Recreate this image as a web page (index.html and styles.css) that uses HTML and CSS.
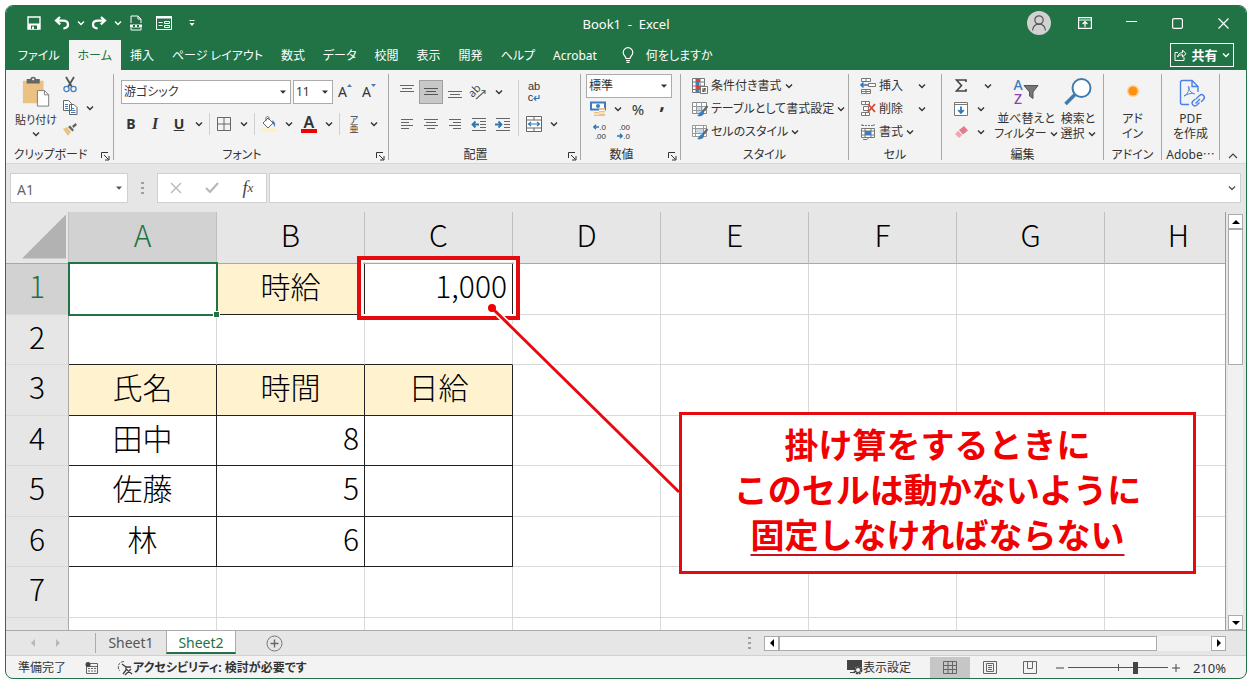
FILE: index.html
```html
<!DOCTYPE html>
<html lang="ja">
<head>
    <meta charset="utf-8">
    <title>Book1 - Excel</title>
    <link rel="stylesheet" href="styles.css">
</head>
<body>
    <svg class="defs" aria-hidden="true">
        <symbol id="chev" viewBox="0 0 8 8"><path d="M1 2.5l3 3 3-3" fill="none" stroke="currentColor" stroke-width="1.4"/></symbol>
        <symbol id="tri" viewBox="0 0 8 8"><path d="M1 2.5h6L4 5.8z" fill="currentColor"/></symbol>
        <symbol id="launch" viewBox="0 0 10 10"><path d="M1.5 7V1.5H8M4 4l4.5 4.5M9 5v4H5" fill="none" stroke="currentColor"/></symbol>
        <symbol id="left" viewBox="0 0 8 8"><path d="M6 0v8L2 4z" fill="currentColor"/></symbol>
        <symbol id="right" viewBox="0 0 8 8"><path d="M2 0v8l4-4z" fill="currentColor"/></symbol>
    </svg>

    <div class="window">
        <header class="titlebar">
            <div class="quick">
                <button class="qbtn" aria-label="上書き保存"><svg width="14" height="14" viewBox="0 0 14 14"><path d="M1 1h12v12H1z" fill="none" stroke="#fff" stroke-width="1.4"/><path d="M1 7.5h12V13H1z" fill="#fff"/><path d="M4 9.5h6V13H4z" fill="#217346"/><path d="M5 10.5h2V13H5z" fill="#fff"/></svg></button>
                <button class="qbtn" aria-label="元に戻す"><svg width="16" height="14" viewBox="0 0 16 14"><path d="M6 1L2 4.6l4.2 3.8M2.5 4.7H9c3 0 5 1.6 5 3.9 0 2.4-2 3.7-4.6 3.9" fill="none" stroke="#fff" stroke-width="2.2"/></svg></button>
                <button class="qcaret" aria-label="元に戻す一覧"><svg width="8" height="8"><use href="#chev"/></svg></button>
                <button class="qbtn" aria-label="やり直し"><svg width="16" height="14" viewBox="0 0 16 14"><path d="M10 1l4 3.6-4.2 3.8M13.5 4.7H7c-3 0-5 1.6-5 3.9 0 2.4 2 3.7 4.6 3.9" fill="none" stroke="#fff" stroke-width="2.2"/></svg></button>
                <button class="qcaret" aria-label="やり直し一覧"><svg width="8" height="8"><use href="#chev"/></svg></button>
                <button class="qbtn" aria-label="印刷プレビュー"><svg width="14" height="16" viewBox="0 0 14 16"><path d="M2 8V1h7l3 3v4M9 1v3h3M2 13v2h10v-2" fill="none" stroke="#fff"/><path d="M1 9.5h12v3H1z" fill="#fff"/><path d="M4 10h6v2H4z" fill="#217346"/><path d="M6 10h2v2H6z" fill="#fff"/></svg></button>
                <button class="qbtn" aria-label="フォーム"><svg width="16" height="14" viewBox="0 0 16 14"><path d="M.5.5h15v13H.5z" fill="none" stroke="#fff"/><path d="M0 0h16v2.500H0zM2.500 6h4v1h-4zM2.500 9h4v1h-4z" fill="#fff"/><path d="M8.500 5.500h5v2h-5zM8.500 9.500h5v2h-5z" fill="none" stroke="#fff"/></svg></button>
                <button class="qbtn" aria-label="クイック アクセスのカスタマイズ"><svg width="8" height="8" viewBox="0 0 8 8"><path d="M1.500 1h5v1h-5zM1.500 4h5L4 7z" fill="#fff"/></svg></button>
            </div>
            <div class="doc-title">Book1&nbsp; -&nbsp; Excel</div>
            <div class="sysbtns">
                <button aria-label="アカウント"><svg width="24" height="24" viewBox="0 0 24 24"><circle cx="12" cy="12" r="12" fill="#d2d2d2"/><circle cx="12" cy="9" r="4.2" fill="none" stroke="#555" stroke-width="1.2"/><path d="M5.500 19.500c.5-4.500 3-6.300 6.500-6.300s6 1.800 6.500 6.300" fill="none" stroke="#555" stroke-width="1.2"/></svg></button>
                <button aria-label="リボンの表示オプション"><svg width="14" height="12" viewBox="0 0 14 12"><path d="M.6.6h12.800v10.800H.6zM.6 3h12.800M7 10V4.800M4.600 7L7 4.700 9.400 7" fill="none" stroke="#fff" stroke-width="1.2"/></svg></button>
                <button aria-label="最小化"><svg width="11" height="11" viewBox="0 0 11 11"><path d="M0 3.500h11" stroke="#fff" stroke-width="1.2"/></svg></button>
                <button aria-label="最大化"><svg width="11" height="11" viewBox="0 0 11 11"><rect x=".6" y=".6" width="9.8" height="9.8" rx="1.5" fill="none" stroke="#fff" stroke-width="1.2"/></svg></button>
                <button aria-label="閉じる"><svg width="11" height="11" viewBox="0 0 11 11"><path d="M.5.5l10 10m0-10l-10 10" stroke="#fff" stroke-width="1.2"/></svg></button>
            </div>
        </header>

        <nav class="tabs">
            <a href="#">ファイル</a>
            <a href="#" class="active">ホーム</a>
            <a href="#">挿入</a>
            <a href="#">ページ レイアウト</a>
            <a href="#">数式</a>
            <a href="#">データ</a>
            <a href="#">校閲</a>
            <a href="#">表示</a>
            <a href="#">開発</a>
            <a href="#">ヘルプ</a>
            <a href="#">Acrobat</a>
            <a href="#" class="tell"><svg width="12" height="16" viewBox="0 0 12 16"><path d="M4 11.500c0-2-2.800-3-2.800-6a4.800 4.800 0 019.600 0c0 3-2.800 4-2.800 6zM4 13.500h4M4.500 15.300h3" fill="none" stroke="#fff" stroke-width="1.2"/></svg>何をしますか</a>
            <button class="share"><svg width="13" height="12" viewBox="0 0 13 12"><path d="M4 3.500H1v8h9V8M3.500 8c.5-3 2.500-4.300 5-4.300V1L12 4.800 8.500 8V5.800C6 5.800 4.500 6.500 3.500 8z" fill="none" stroke="#fff"/></svg>共有<svg width="8" height="8"><use href="#chev"/></svg></button>
        </nav>

        <section class="ribbon">
            <div class="group g-clip">
                <div class="body">
                    <button class="big">
                        <svg width="28" height="30" viewBox="0 0 28 32"><path d="M0 4h22v24H0z" fill="#eac282"/><path d="M4 2h4c0-3 6-3 6 0h4v5H4z" fill="#666"/><circle cx="11" cy="2.500" r="1.200" fill="#f3f3f3"/><path d="M15.500 14.500h7.500l4.500 4.500v12H15.500z" fill="#fff" stroke="#777"/><path d="M23 14.500v4.500h4.500" fill="none" stroke="#777"/></svg>
                        <span>貼り付け</span>
                        <svg width="8" height="8"><use href="#chev"/></svg>
                    </button>
                    <div class="col">
                        <button class="ib" aria-label="切り取り"><svg width="14" height="16" viewBox="0 0 14 16"><path d="M3 0l6 10M11 0L5 10" stroke="#555" stroke-width="1.8"/><circle cx="3.500" cy="12" r="2.600" fill="none" stroke="#4a7ebb" stroke-width="1.3"/><circle cx="10.500" cy="12" r="2.600" fill="none" stroke="#4a7ebb" stroke-width="1.3"/></svg></button>
                        <button class="ib" aria-label="コピー"><svg width="15" height="15" viewBox="0 0 15 15"><path d="M.5.5h5l3 3v7h-8zM6.500 4.500h4.500l3 3v7H6.500z" fill="#fff" stroke="#666"/><path d="M2 4.500h3M2 6.500h3M2 8.500h3M8 8.500h3M8 10.500h4.500M8 12.500h4.500" stroke="#4a7ebb"/></svg></button>
                        <button class="ib" aria-label="書式のコピー"><svg width="14" height="13" viewBox="0 0 14 13"><path d="M0 6l4-2 4 5-3 4z" fill="#eac282"/><path d="M5 4l2-1.500L11 7 9.500 8.500zM9 3l3.500-3L14 2l-3.500 3z" fill="#666"/></svg></button>
                    </div>
                    <button class="caret" aria-label="コピーのオプション"><svg width="8" height="8"><use href="#chev"/></svg></button>
                </div>
                <div class="name">クリップボード<button class="launch" aria-label="クリップボードの詳細"><svg width="10" height="10"><use href="#launch"/></svg></button></div>
            </div>

            <div class="group g-font">
                <div class="body rows">
                    <div class="row">
                        <span class="combo font-name"><select aria-label="フォント名"><option>游ゴシック</option></select><svg width="8" height="8"><use href="#tri"/></svg></span>
                        <span class="combo font-size"><select aria-label="フォント サイズ"><option>11</option></select><svg width="8" height="8"><use href="#tri"/></svg></span>
                        <button class="ib letter" aria-label="フォント サイズの拡大">A<svg width="5" height="3" viewBox="0 0 5 3"><path d="M0 3l2.500-3L5 3z" fill="#4a7ebb"/></svg></button>
                        <button class="ib letter" aria-label="フォント サイズの縮小">A<svg width="5" height="3" viewBox="0 0 5 3"><path d="M0 0l2.500 3L5 0z" fill="#4a7ebb"/></svg></button>
                    </div>
                    <div class="row">
                        <button class="ib bold">B</button>
                        <button class="ib italic">I</button>
                        <button class="ib under">U</button>
                        <button class="caret" aria-label="下線の種類"><svg width="8" height="8"><use href="#chev"/></svg></button>
                        <i class="sep"></i>
                        <button class="ib" aria-label="罫線"><svg width="14" height="14" viewBox="0 0 14 14"><path d="M.5.5h13v13H.5zM7 0v14M0 7h14" fill="none" stroke="#666"/></svg></button>
                        <button class="caret" aria-label="罫線の種類"><svg width="8" height="8"><use href="#chev"/></svg></button>
                        <i class="sep"></i>
                        <button class="ib" aria-label="塗りつぶしの色"><svg width="16" height="16" viewBox="0 0 16 16"><path d="M0 12.500h16V16H0z" fill="#fff0c0"/><path d="M2 7l5-5 5 5-5 5zM5 5V2c0-2 3-2 3 0v2" fill="#fff" stroke="#666"/><path d="M11 4.500c3 .5 3.500 3 3 7-.5-2-1.500-3-2.500-4z" fill="#4a7ebb"/></svg></button>
                        <button class="caret" aria-label="塗りつぶしの色の選択"><svg width="8" height="8"><use href="#chev"/></svg></button>
                        <button class="ib fontcolor">A</button>
                        <button class="caret" aria-label="文字色の選択"><svg width="8" height="8"><use href="#chev"/></svg></button>
                        <i class="sep"></i>
                        <button class="ib ruby"><span>ア</span><span>亜</span></button>
                        <button class="caret" aria-label="ふりがなの設定"><svg width="8" height="8"><use href="#chev"/></svg></button>
                    </div>
                </div>
                <div class="name">フォント<button class="launch" aria-label="フォントの詳細"><svg width="10" height="10"><use href="#launch"/></svg></button></div>
            </div>

            <div class="group g-align">
                <div class="body">
                    <div class="rows">
                        <div class="row">
                            <button class="ib" aria-label="上揃え"><svg width="14" height="14" viewBox="0 0 14 14"><path d="M0 .5h14M2 3.500h10M0 6.500h14" stroke="#666"/></svg></button>
                            <button class="ib on" aria-label="上下中央揃え"><svg width="14" height="14" viewBox="0 0 14 14"><path d="M0 3.500h14M2 6.500h10M0 9.500h14" stroke="#555"/></svg></button>
                            <button class="ib" aria-label="下揃え"><svg width="14" height="14" viewBox="0 0 14 14"><path d="M0 6.500h14M2 9.500h10M0 12.500h14" stroke="#666"/></svg></button>
                            <button class="ib" aria-label="方向"><svg width="16" height="16" viewBox="0 0 16 16"><text x="-1" y="10" transform="rotate(-45 5 9)" font-size="11" fill="#444">ab</text><path d="M5 15l9-8M10.500 6.500H14V10" fill="none" stroke="#666" stroke-width="1.2"/></svg></button>
                            <button class="caret" aria-label="方向の選択"><svg width="8" height="8"><use href="#chev"/></svg></button>
                        </div>
                        <div class="row">
                            <button class="ib" aria-label="左揃え"><svg width="12" height="12" viewBox="0 0 12 12"><path d="M0 1.500h12M0 4.500h8M0 7.500h12M0 10.500h8" stroke="#666"/></svg></button>
                            <button class="ib" aria-label="中央揃え"><svg width="14" height="12" viewBox="0 0 14 12"><path d="M0 1.500h14M2 4.500h10M0 7.500h14M3 10.500h8" stroke="#666"/></svg></button>
                            <button class="ib" aria-label="右揃え"><svg width="12" height="12" viewBox="0 0 12 12"><path d="M0 1.500h12M4 4.500h8M0 7.500h12M4 10.500h8" stroke="#666"/></svg></button>
                            <button class="ib" aria-label="インデントを減らす"><svg width="16" height="13" viewBox="0 0 16 13"><path d="M1 .5h14M9 3.500h6M9 6.500h6M9 9.500h6M1 12.500h14" stroke="#666"/><path d="M8 6.500H2M4.500 3.500l-3 3 3 3" fill="none" stroke="#2e75b6" stroke-width="1.8"/></svg></button>
                            <button class="ib" aria-label="インデントを増やす"><svg width="16" height="13" viewBox="0 0 16 13"><path d="M1 .5h14M9 3.500h6M9 6.500h6M9 9.500h6M1 12.500h14" stroke="#666"/><path d="M0 6.500h6M3.500 3.500l3 3-3 3" fill="none" stroke="#2e75b6" stroke-width="1.8"/></svg></button>
                        </div>
                    </div>
                    <i class="sep tall"></i>
                    <div class="rows">
                        <div class="row">
                            <button class="ib wrap"><span>ab</span><span>c<svg width="7" height="6" viewBox="0 0 7 6"><path d="M6 0v3.500H1M3.200 1.200L1 3.500l2.200 2.200" fill="none" stroke="#2e75b6" stroke-width="1.2"/></svg></span></button>
                        </div>
                        <div class="row">
                            <button class="ib" aria-label="セルを結合して中央揃え"><svg width="16" height="16" viewBox="0 0 16 16"><path d="M.5.5h15v15H.5zM0 4h16M0 12h16M8 0v4M8 12v4" fill="#fff" stroke="#666"/><path d="M2.500 8h11M5 6L2.500 8 5 10M11 6l2.500 2L11 10" fill="none" stroke="#2e75b6" stroke-width="1.2"/></svg></button>
                            <button class="caret" aria-label="結合の選択"><svg width="8" height="8"><use href="#chev"/></svg></button>
                        </div>
                    </div>
                </div>
                <div class="name">配置<button class="launch" aria-label="配置の詳細"><svg width="10" height="10"><use href="#launch"/></svg></button></div>
            </div>

            <div class="group g-num">
                <div class="body rows">
                    <div class="row">
                        <span class="combo numfmt"><select aria-label="表示形式"><option>標準</option></select><svg width="8" height="8"><use href="#tri"/></svg></span>
                    </div>
                    <div class="row">
                        <button class="ib" aria-label="通貨表示形式"><svg width="17" height="16" viewBox="0 0 17 16"><path d="M1 1.500h14v7H1z" fill="#fff" stroke="#3c7cc0" stroke-width="2"/><circle cx="8" cy="5" r="2" fill="#3c7cc0"/><path d="M9 7h6v8H9zM4 11h5v4H4z" fill="#eac282"/><path d="M9 9.500h6M9 12h6M4 13h5" stroke="#fff"/></svg></button>
                        <button class="caret" aria-label="通貨の選択"><svg width="8" height="8"><use href="#chev"/></svg></button>
                        <button class="ib pct">%</button>
                        <button class="ib comma">,</button>
                    </div>
                    <div class="row">
                        <button class="ib dec"><span><svg width="6" height="6" viewBox="0 0 6 6"><path d="M6 3H1M3 .8L.8 3 3 5.200" fill="none" stroke="#2e75b6" stroke-width="1.4"/></svg>.0</span><span>.00</span></button>
                        <button class="ib dec"><span>.00</span><span><svg width="6" height="6" viewBox="0 0 6 6"><path d="M0 3h5M3 .8L5.200 3 3 5.200" fill="none" stroke="#2e75b6" stroke-width="1.4"/></svg>.0</span></button>
                    </div>
                </div>
                <div class="name">数値<button class="launch" aria-label="数値の詳細"><svg width="10" height="10"><use href="#launch"/></svg></button></div>
            </div>

            <div class="group g-style">
                <div class="body rows">
                    <button class="line"><svg width="16" height="16" viewBox="0 0 16 16"><path d="M.5.5h12v14H.5zM4 0v15M8 0v15M0 4h13M0 8h13M0 11.500h13" fill="#fff" stroke="#777"/><path d="M4 1h4v3H4zM4 8h5v3H4z" fill="#d9462f"/><path d="M4 4h3v4H4zM4 11h3v3H4z" fill="#3c7cc0"/><path d="M8.500 8.500h7v7h-7z" fill="#fff" stroke="#777"/><path d="M10 11h4M10 13h4M13 10l-2 4" stroke="#444"/></svg>条件付き書式<svg width="8" height="8"><use href="#chev"/></svg></button>
                    <button class="line"><svg width="16" height="16" viewBox="0 0 16 16"><path d="M.5 1.500h14v11H.5z" fill="#fff" stroke="#888"/><path d="M5 5h6v7H5z" fill="#c5d9ef"/><path d="M4.500 1v12M9.500 1v12M0 5.500h15M0 9.500h15" fill="none" stroke="#999"/><path d="M15.500 5L10.500 11" stroke="#666" stroke-width="2"/><path d="M10.500 10c2 1 2 2.500.5 4-1.500 1.500-4 1.500-6 1 2-1 2-4 5.500-5z" fill="#3c7cc0"/></svg>テーブルとして書式設定<svg width="8" height="8"><use href="#chev"/></svg></button>
                    <button class="line"><svg width="16" height="16" viewBox="0 0 16 16"><path d="M.5 1.500h14v11H.5zM3.500 1v12M11.500 1v12M0 4.500h15M0 9.500h15" fill="#fff" stroke="#999"/><path d="M4 5h7v4H4z" fill="#c5d9ef"/><path d="M15.500 5L10.500 11" stroke="#666" stroke-width="2"/><path d="M10.500 10c2 1 2 2.500.5 4-1.500 1.500-4 1.500-6 1 2-1 2-4 5.500-5z" fill="#3c7cc0"/></svg>セルのスタイル<svg width="8" height="8"><use href="#chev"/></svg></button>
                </div>
                <div class="name">スタイル</div>
            </div>

            <div class="group g-cell">
                <div class="body rows">
                    <button class="line wide"><svg width="16" height="16" viewBox="0 0 16 16"><path d="M1.500.5h9v3h-9zM6 .5v3M1.500 11.500h9v4h-9zM6 11.500v4M1.500 13.500h9M8.500 5.500h7v3h-7z" fill="#fff" stroke="#777"/><path d="M8 7H1M3.500 4.500L1 7l2.500 2.500" fill="none" stroke="#2e75b6" stroke-width="1.5"/></svg>挿入<svg width="8" height="8"><use href="#chev"/></svg></button>
                    <button class="line wide"><svg width="16" height="16" viewBox="0 0 16 16"><path d="M1.500.5h8v3h-8zM5.500.5v3M1.500 11.500h8v3h-8zM5.500 11.500v3M3.500 5.500h5v4h-5z" fill="#fff" stroke="#777"/><path d="M8 3l7 8M15 3l-7 8" stroke="#d9462f" stroke-width="1.8"/></svg>削除<svg width="8" height="8"><use href="#chev"/></svg></button>
                    <button class="line"><svg width="16" height="16" viewBox="0 0 16 16"><path d="M2 0v3M14 0v3M2 1.500h12" stroke="#3c7cc0" stroke-dasharray="2 1"/><path d="M1.500 4.500h13v9h-13zM5 4.500v9M11 4.500v9M1.500 7h13M1.500 11h13" fill="#fff" stroke="#777"/><path d="M5 7h6v4H5z" fill="#3c7cc0"/><path d="M3 15.500h4l2-2" fill="none" stroke="#777"/></svg>書式<svg width="8" height="8"><use href="#chev"/></svg></button>
                </div>
                <div class="name">セル</div>
            </div>

            <div class="group g-edit">
                <div class="body">
                    <div class="rows">
                        <div class="row">
                            <button class="ib" aria-label="オート SUM"><svg width="12" height="13" viewBox="0 0 12 13"><path d="M11 3V1H1.500L6.500 6.500 1.500 12H11v-2" fill="none" stroke="#444" stroke-width="1.6"/></svg></button>
                            <button class="caret far" aria-label="関数の選択"><svg width="8" height="8"><use href="#chev"/></svg></button>
                        </div>
                        <div class="row">
                            <button class="ib" aria-label="フィル"><svg width="14" height="14" viewBox="0 0 14 14"><path d="M.5.5h13v13H.5zM0 2.500h14" fill="#fff" stroke="#777"/><path d="M7 4.500v6M4.200 8L7 11l2.800-3" fill="none" stroke="#2e75b6" stroke-width="1.8"/></svg></button>
                            <button class="caret" aria-label="フィルの選択"><svg width="8" height="8"><use href="#chev"/></svg></button>
                        </div>
                        <div class="row">
                            <button class="ib" aria-label="クリア"><svg width="14" height="12" viewBox="0 0 14 12"><path d="M5 4l5-4 4 4.500-5 4z" fill="#e8798b"/><path d="M4.200 4.800l4 4.300L5 12 1 8z" fill="#f0a5b1"/></svg></button>
                            <button class="caret" aria-label="クリアの選択"><svg width="8" height="8"><use href="#chev"/></svg></button>
                        </div>
                    </div>
                    <button class="big sort">
                        <span class="az"><span class="letters"><b>A</b><b>Z</b></span><svg width="16" height="16" viewBox="0 0 16 16"><path d="M1 1.500h14L10 8v6.500L6.500 12V8z" fill="#777" stroke="#555"/></svg></span>
                        <span>並べ替えと</span>
                        <span>フィルター <svg width="8" height="8"><use href="#chev"/></svg></span>
                    </button>
                    <button class="big">
                        <svg width="28" height="28" viewBox="0 0 28 28"><circle cx="17.500" cy="10" r="9" fill="#fff" stroke="#3c7cb0" stroke-width="2"/><path d="M11 16.500L1.500 26" stroke="#3c7cb0" stroke-width="3.6"/></svg>
                        <span>検索と</span>
                        <span>選択 <svg width="8" height="8"><use href="#chev"/></svg></span>
                    </button>
                </div>
                <div class="name">編集</div>
            </div>

            <div class="group g-narrow">
                <div class="body">
                    <button class="big">
                        <svg width="28" height="28" viewBox="0 0 28 28"><circle cx="14" cy="13" r="6" fill="#ffd08a"/><circle cx="14" cy="13" r="4.6" fill="#ff9012"/></svg>
                        <span>アド</span><span>イン</span>
                    </button>
                </div>
                <div class="name">アドイン</div>
            </div>

            <div class="group g-narrow">
                <div class="body">
                    <button class="big">
                        <svg width="28" height="28" viewBox="0 0 28 28"><path d="M13 26.500H6.500a2 2 0 01-2-2v-20a2 2 0 012-2H16l6 6V14M16 2.500v6h6" fill="none" stroke="#4a80e8" stroke-width="1.4"/><path d="M8 18c3-1 6-7 5-9.500-1.500-1-1 5 5.500 7.500-2-1.500-7 0-10.500 2z" fill="none" stroke="#4a80e8"/><path d="M20 21l3.500-3.500c3-2.500 6.500 1 4 4L25 24M24 21l-4.500 4.500M23.500 24.500L21 27c-3 2.500-6.500-1-4-4l2.500-2" fill="none" stroke="#4a80e8" stroke-width="1.4"/></svg>
                        <span>PDF</span><span>を作成</span>
                    </button>
                </div>
                <div class="name">Adobe⋯</div>
            </div>
            <button class="collapse" aria-label="リボンを折りたたむ"><svg width="10" height="8" viewBox="0 0 10 8"><path d="M1 6l4-4 4 4" fill="none" stroke="#444" stroke-width="1.2"/></svg></button>
        </section>

        <section class="formula">
            <span class="combo namebox"><input type="text" value="A1" aria-label="名前ボックス"><svg width="8" height="8"><use href="#tri"/></svg></span>
            <span class="dots"></span>
            <div class="fx">
                <button aria-label="キャンセル"><svg width="12" height="12" viewBox="0 0 12 12"><path d="M1 1l10 10M11 1L1 11" stroke="#b8b8b8" stroke-width="1.4"/></svg></button>
                <button aria-label="入力"><svg width="14" height="12" viewBox="0 0 14 12"><path d="M1 6l4 4 8-9" fill="none" stroke="#b8b8b8" stroke-width="2.2"/></svg></button>
                <button class="fn">f<small>x</small></button>
            </div>
            <span class="combo input"><input type="text" aria-label="数式バー"><svg width="8" height="8"><use href="#chev"/></svg></span>
        </section>

        <main class="work">
            <div class="sheet">
                <table>
                    <thead>
                        <tr><th class="corner"></th><th class="sel">A</th><th>B</th><th>C</th><th>D</th><th>E</th><th>F</th><th>G</th><th>H</th></tr>
                    </thead>
                    <tbody>
                        <tr><th class="sel">1</th><td class="cursor"></td><td class="box fill">時給</td><td class="box num target">1,000</td><td></td><td></td><td></td><td></td><td></td></tr>
                        <tr class="above"><th>2</th><td></td><td></td><td></td><td></td><td></td><td></td><td></td><td></td></tr>
                        <tr><th>3</th><td class="box fill">氏名</td><td class="box fill">時間</td><td class="box fill">日給</td><td></td><td></td><td></td><td></td><td></td></tr>
                        <tr><th>4</th><td class="box">田中</td><td class="box num">8</td><td class="box"></td><td></td><td></td><td></td><td></td><td></td></tr>
                        <tr><th>5</th><td class="box">佐藤</td><td class="box num">5</td><td class="box"></td><td></td><td></td><td></td><td></td><td></td></tr>
                        <tr><th>6</th><td class="box">林</td><td class="box num">6</td><td class="box"></td><td></td><td></td><td></td><td></td><td></td></tr>
                        <tr><th>7</th><td></td><td></td><td></td><td></td><td></td><td></td><td></td><td></td></tr>
                        <tr><th>8</th><td></td><td></td><td></td><td></td><td></td><td></td><td></td><td></td></tr>
                    </tbody>
                </table>
                <svg class="leader" width="190" height="190" viewBox="0 0 190 190"><path d="M4 4l187 184" stroke="#fff" stroke-width="6"/><path d="M4 4l187 184" stroke="#e60a0f" stroke-width="3"/><circle cx="4" cy="4" r="4" fill="#f00000"/></svg>
                <div class="callout">掛け算をするときに<br>このセルは動かないように<br><u>固定しなければならない</u></div>
            </div>
            <div class="vscroll">
                <button aria-label="上へ"><svg width="8" height="8" viewBox="0 0 8 8"><path d="M0 6h8L4 2z"/></svg></button>
                <div class="thumb"></div>
                <div class="track"></div>
                <button aria-label="下へ"><svg width="8" height="8" viewBox="0 0 8 8"><path d="M0 2h8L4 6z"/></svg></button>
            </div>
        </main>

        <div class="sheetbar">
            <div class="arrows">
                <button aria-label="前のシート"><svg width="8" height="8"><use href="#left"/></svg></button>
                <button aria-label="次のシート"><svg width="8" height="8"><use href="#right"/></svg></button>
            </div>
            <a href="#" class="stab">Sheet1</a>
            <a href="#" class="stab current">Sheet2</a>
            <button class="add" aria-label="新しいシート"><svg width="17" height="17" viewBox="0 0 17 17"><circle cx="8.500" cy="8.500" r="7.500" fill="none" stroke="#777"/><path d="M8.500 4.500v8M4.500 8.500h8" stroke="#666" stroke-width="1.4"/></svg></button>
            <span class="dots"></span>
            <div class="hscroll">
                <button aria-label="左へ"><svg width="8" height="8"><use href="#left"/></svg></button>
                <div class="thumb"></div>
                <div class="track"></div>
                <button aria-label="右へ"><svg width="8" height="8"><use href="#right"/></svg></button>
            </div>
        </div>

        <footer class="status">
            <span>準備完了</span>
            <svg class="macro" width="13" height="12" viewBox="0 0 13 12"><path d="M1.500 1.500h11v10h-11zM1.500 4.500h11" fill="none" stroke="#666"/><path d="M3 6.500h8M3 9h8" stroke="#666" stroke-dasharray="2 1"/><circle cx="3" cy="2.500" r="2.500" fill="#444"/></svg>
            <span class="access"><svg width="16" height="15" viewBox="0 0 16 15"><path d="M7 1.500a5.500 5.500 0 00-4 9.500" fill="none" stroke="#555" stroke-dasharray="3 1"/><path d="M5 4l4 3h5M9 7v3l-3 4M9 9l6 5M14 9l-6 6" fill="none" stroke="#444" stroke-width="1.3"/></svg>アクセシビリティ: 検討が必要です</span>
            <span class="disp"><svg width="16" height="15" viewBox="0 0 16 15"><path d="M0 0h15v10H0zM3 12h5v1H3z" fill="#444"/><circle cx="11" cy="10" r="3.500" fill="#f3f3f3" stroke="#444" stroke-width="2" stroke-dasharray="2 .7"/><circle cx="11" cy="10" r="2.500" fill="none" stroke="#444"/></svg>表示設定</span>
            <div class="views">
                <button class="on" aria-label="標準"><svg width="14" height="14" viewBox="0 0 14 14"><path d="M.5.5h13v12H.5zM5 0v13M9.500 0v13M0 4.500h14M0 8.500h14" fill="none" stroke="#666"/></svg></button>
                <button aria-label="ページ レイアウト"><svg width="14" height="14" viewBox="0 0 14 14"><path d="M.5.5h13v12H.5zM3.500 2.500h7v8h-7zM5 4.500h4M5 6.500h4M5 8.500h4" fill="none" stroke="#666"/></svg></button>
                <button aria-label="改ページ プレビュー"><svg width="14" height="14" viewBox="0 0 14 14"><path d="M.5.5h13v12H.5zM4.500 0v7.500h5V0" fill="none" stroke="#666"/></svg></button>
            </div>
            <button class="zoom" aria-label="縮小"><svg width="8" height="8" viewBox="0 0 8 8"><path d="M0 4h8" stroke="#444"/></svg></button>
            <input type="range" min="10" max="400" value="275" aria-label="ズーム">
            <button class="zoom" aria-label="拡大"><svg width="8" height="8" viewBox="0 0 8 8"><path d="M0 4h8M4 0v8" stroke="#444"/></svg></button>
            <span class="percent">210%</span>
        </footer>
    </div>
</body>
</html>
```
FILE: styles.css
```css
* {
    box-sizing: border-box;
}
body {
    margin: 0;
    padding: 5px 4px 4px 5px;
    height: 100vh;
    background: #fff;
    color: #333;
    font-family: "Noto Sans", "Noto Sans CJK JP", sans-serif;
    font-size: 12px;
    line-height: 16px;
    font-feature-settings: "palt";
}
.defs {
    position: absolute;
    width: 0;
    height: 0;
}
svg {
    flex: none;
    overflow: visible;
}
button, input, select {
    font: inherit;
    font-feature-settings: inherit;
    color: inherit;
    border: 0;
    padding: 0;
    margin: 0;
    background: none;
    border-radius: 0;
}
button {
    display: flex;
    align-items: center;
    justify-content: center;
    white-space: nowrap;
}
a {
    color: inherit;
    text-decoration: none;
}
.window {
    display: flex;
    flex-direction: column;
    height: 100%;
    border: 1px solid #217346;
    border-radius: 8px;
    overflow: hidden;
    background: #f3f3f3;
}

/* title bar */
.titlebar {
    display: grid;
    grid-template-columns: 1fr auto 1fr;
    align-items: center;
    height: 34px;
    background: #217346;
    color: #fff;
}
.quick {
    display: flex;
    padding-left: 14px;
}
.qbtn {
    width: 28px;
    height: 28px;
}
.qcaret {
    width: 9px;
    height: 28px;
}
.doc-title {
    padding-top: 2px;
    font-size: 13px;
}
.sysbtns {
    display: flex;
    justify-content: flex-end;
}
.sysbtns button {
    width: 46px;
    height: 30px;
}

/* ribbon tabs */
.tabs {
    display: flex;
    height: 30px;
    background: #217346;
    color: #fff;
    padding-left: 3px;
}
.tabs a {
    padding: 0 9px;
    line-height: 31px;
    white-space: nowrap;
}
.tabs .active {
    background: #f3f3f3;
    color: #217346;
}
.tabs .tell {
    display: flex;
    align-items: center;
    gap: 12px;
    padding-left: 16px;
}
.share {
    gap: 4px;
    width: 64px;
    height: 24px;
    margin: 3px 12px 0 auto;
    border: 1px solid #fff;
    font-size: 13px;
    font-weight: 700;
}

/* ribbon */
.ribbon {
    display: flex;
    height: 94px;
    padding: 4px 0 3px;
    background: #f3f3f3;
    border-bottom: 1px solid #d8d8d8;
}
.group {
    flex: none;
    display: flex;
    flex-direction: column;
    border-right: 1px solid #a8a8a8;
}
.g-clip { width: 108px; }
.g-font { width: 275px; }
.g-align { width: 192px; }
.g-num { width: 100px; }
.g-style { width: 168px; }
.g-cell { width: 93px; }
.g-edit { width: 162px; }
.g-narrow { width: 58px; }
.body {
    flex: 1;
    display: flex;
    padding: 0 5px;
}
.rows {
    display: flex;
    flex-direction: column;
}
.row {
    display: flex;
    align-items: center;
    height: 23px;
}
.g-font .row, .g-align .row {
    height: 32px;
}
.g-font .body, .g-align .body {
    padding-top: 2px;
}
.g-align .body {
    padding-left: 6px;
    padding-right: 0;
}
.name {
    position: relative;
    height: 16px;
    margin-bottom: -3px;
    padding-right: 18px;
    text-align: center;
    white-space: nowrap;
}
.g-style .name, .g-cell .name, .g-edit .name, .g-narrow .name {
    padding-right: 0;
}
.launch {
    position: absolute;
    right: 2px;
    bottom: 1px;
    width: 12px;
    height: 12px;
}
.ib {
    width: 24px;
    height: 22px;
}
.ib.on {
    height: 24px;
    background: #c8c8c8;
    border: 1px solid #a0a0a0;
}
.caret {
    width: 16px;
    height: 22px;
}
.caret.far {
    width: 24px;
    padding-left: 6px;
}
.sep {
    width: 1px;
    height: 22px;
    margin: 0 2px;
    background: #d0d0d0;
}
.sep.tall {
    height: 56px;
    margin: 4px 3px 0;
}
.big {
    flex-direction: column;
    justify-content: flex-start;
    height: 70px;
    padding-top: 4px;
    line-height: 15px;
}
.big > svg:first-child, .az {
    margin-bottom: 5px;
}
.col {
    display: flex;
    flex-direction: column;
}
.g-clip .caret {
    margin-top: 23px;
}
.g-clip .body {
    padding-left: 8px;
    padding-right: 0;
}
.g-clip .big {
    width: 44px;
    padding-top: 3px;
    font-size: 11px;
}
.g-clip .big svg:last-child {
    margin-top: 3px;
}
.combo {
    position: relative;
    display: block;
    height: 24px;
    background: #fff;
    border: 1px solid #ababab;
}
.combo select, .combo input {
    display: block;
    width: 100%;
    height: 100%;
    padding: 0 2px;
    appearance: none;
    outline: 0;
}
.combo svg {
    position: absolute;
    right: 3px;
    top: 7px;
}
.font-name {
    width: 170px;
    margin: 0 2px;
}
.font-size {
    width: 40px;
}
.numfmt {
    width: 86px;
}
.letter {
    align-items: flex-start;
    font-size: 14px;
    line-height: 22px;
}
.letter svg {
    margin-top: 3px;
}
.bold {
    font-size: 14px;
    font-weight: 700;
}
.italic {
    font-family: "Liberation Serif", serif;
    font-size: 16px;
    font-style: italic;
    font-weight: 700;
}
.under {
    font-size: 14px;
    font-weight: 700;
    text-decoration: underline;
}
.fontcolor {
    width: 16px;
    height: 18px;
    margin: 0 4px;
    border-bottom: 4px solid #f00000;
    font-size: 16px;
    font-weight: 600;
}
.ruby {
    flex-direction: column;
    font-size: 9px;
    line-height: 9px;
}
.wrap, .dec {
    flex-direction: column;
    font-family: "Liberation Sans", sans-serif;
    font-size: 10px;
    line-height: 11px;
}
.wrap {
    font-size: 11px;
}
.dec {
    align-items: flex-end;
    padding-right: 4px;
    font-size: 8px;
    line-height: 9px;
}
.pct {
    font-size: 15px;
}
.comma {
    font-size: 20px;
    font-weight: 700;
    line-height: 8px;
    padding-bottom: 14px;
}
.line {
    gap: 3px;
    height: 23px;
    justify-content: flex-start;
}
.line.wide svg:last-child {
    margin-left: 12px;
}
.g-style .body, .g-cell .body {
    padding-left: 11px;
}
.g-edit .body {
    padding: 0 0 0 7px;
}
.g-edit .rows {
    width: 49px;
}
.g-edit .big {
    width: 56px;
}
.g-edit .big + .big {
    width: 48px;
}
.az {
    display: flex;
    align-items: center;
    height: 28px;
}
.letters {
    display: flex;
    flex-direction: column;
    font-size: 14px;
    line-height: 14px;
}
.letters b {
    font-weight: 500;
    color: #3c7cc0;
}
.letters b + b {
    color: #8e44ad;
}
.g-narrow .body {
    justify-content: center;
    padding: 0;
}
.collapse {
    align-self: flex-end;
    width: 26px;
    height: 8px;
}

/* formula bar */
.formula {
    display: flex;
    align-items: center;
    height: 48px;
    padding: 0 5px 0 4px;
    background: #e6e6e6;
}
.formula .combo {
    height: 30px;
    border-color: #d0d0d0;
}
.formula .combo svg {
    top: 10px;
    right: 4px;
    color: #555;
}
.namebox {
    width: 118px;
}
.namebox input {
    padding: 2px 0 0 6px;
    font-size: 14px;
    color: #666;
}
.dots {
    width: 3px;
    height: 12px;
    background: repeating-linear-gradient(#a0a0a0 0 2px, transparent 2px 5px);
}
.formula .dots {
    margin: 0 13px;
}
.fx {
    display: flex;
    width: 110px;
    height: 30px;
    margin-right: 2px;
    background: #fff;
    border: 1px solid #d0d0d0;
}
.fx button {
    flex: 1;
}
.fn {
    font-family: "Liberation Serif", serif;
    font-size: 18px;
    font-style: italic;
    color: #444;
}
.fn small {
    font-size: 13px;
}
.input {
    flex: 1;
}

/* grid */
.work {
    flex: 1;
    display: flex;
    min-height: 0;
    background: #e6e6e6;
}
.sheet {
    position: relative;
    flex: 1;
    min-width: 0;
    overflow: hidden;
    background: #fff;
    border-right: 1px solid #9c9c9c;
}
table {
    width: 1247px;
    table-layout: fixed;
    border-collapse: separate;
    border-spacing: 0;
    font-family: "Noto Sans CJK JP", sans-serif;
    font-feature-settings: normal;
    font-size: 30px;
    line-height: 40px;
    font-weight: 300;
    color: #000;
}
th, td {
    height: 50px;
    padding: 0 5px 8px;
    text-align: center;
    font-weight: 300;
    border-right: 1px solid #d9d9d9;
    border-bottom: 1px solid #d9d9d9;
}
tbody tr:nth-child(odd) > * {
    height: 51px;
}
th {
    background: #e6e6e6;
    border-right-color: #a8a8a8;
}
thead th {
    height: 52px;
    width: 148px;
    border-right-color: #c0c0c0;
    border-bottom-color: #a8a8a8;
}
th.sel {
    background: #d2d2d2;
    color: #217346;
}
.corner {
    width: 63px;
    padding: 0 2px 2px 16px;
}
.corner::before {
    content: "";
    display: block;
    height: 44px;
    background: #b2b2b2;
    clip-path: polygon(100% 0, 100% 100%, 0 100%);
}
.box, .above td:nth-child(-n+4) {
    border-bottom-color: #222;
}
.box {
    border-right-color: #222;
}
.fill {
    background: #fff2cf;
}
.num {
    text-align: right;
}
.cursor, .target {
    position: relative;
}
.cursor::before {
    content: "";
    position: absolute;
    inset: -2px -2px -2px -1px;
    border: 2px solid #217346;
}
.cursor::after {
    content: "";
    position: absolute;
    right: -3px;
    bottom: -3px;
    width: 5px;
    height: 5px;
    background: #217346;
    box-shadow: 0 0 0 1px #fff;
}
.target::after {
    content: "";
    position: absolute;
    inset: -8px -8px -6px;
    border: 4px solid #e60a0f;
    box-shadow: inset 0 0 0 2px #fff;
}
.leader {
    position: absolute;
    left: 482px;
    top: 92px;
}
.callout {
    position: absolute;
    left: 673px;
    top: 200px;
    width: 517px;
    padding: 6px 0 15px;
    border: 3px solid #e60a0f;
    background: #fff;
    color: #f00000;
    font-family: "Noto Sans CJK JP", sans-serif;
    font-feature-settings: normal;
    font-size: 34px;
    font-weight: 700;
    line-height: 45px;
    text-align: center;
}
.callout u {
    text-decoration-color: #c8141c;
    text-decoration-thickness: 2px;
    text-underline-offset: 6px;
}

/* scroll bars */
.vscroll {
    display: flex;
    flex-direction: column;
    width: 20px;
    padding: 2px 3px 0 2px;
}
.vscroll button, .hscroll button {
    width: 15px;
    height: 15px;
    background: #fff;
    border: 1px solid #ababab;
    color: #000;
}
.thumb {
    background: #fff;
    border: 1px solid #ababab;
}
.track {
    flex: 1;
    background: #f1f1f1;
}
.vscroll .thumb {
    height: 136px;
}
.hscroll {
    display: flex;
    width: 462px;
}
.hscroll .thumb {
    width: 378px;
}

/* sheet tabs */
.sheetbar {
    display: flex;
    align-items: center;
    height: 26px;
    padding-right: 20px;
    background: #e6e6e6;
    border-top: 1px solid #ababab;
    border-bottom: 1px solid #d0d0d0;
}
.arrows {
    display: flex;
    width: 90px;
    height: 20px;
    padding-left: 14px;
    border-right: 1px solid #ababab;
    color: #b8b8b8;
}
.arrows button {
    width: 25px;
}
.stab {
    align-self: flex-start;
    height: 23px;
    width: 70px;
    font-size: 14px;
    line-height: 23px;
    text-align: center;
    color: #555;
}
.current {
    background: #fff;
    color: #217346;
    border: 1px solid #ababab;
    border-top: 0;
    border-bottom: 2px solid #217346;
}
.add {
    width: 76px;
}
.sheetbar .dots {
    margin: 0 13px 0 auto;
}

/* status bar */
.status {
    display: flex;
    align-items: center;
    height: 22px;
    padding: 1px 20px 0 12px;
    white-space: nowrap;
}
.macro {
    margin: 0 19px;
}
.access {
    display: flex;
    align-items: center;
    font-weight: 700;
}
.disp {
    display: flex;
    align-items: center;
    margin-left: auto;
}
.views {
    display: flex;
    align-self: stretch;
    margin-left: 19px;
}
.views button {
    width: 40px;
}
.views .on {
    background: #c6c6c6;
}
.zoom {
    width: 16px;
    height: 16px;
}
.views + .zoom {
    margin-left: 2px;
}
input[type=range] {
    width: 100px;
    height: 13px;
    appearance: none;
    background: linear-gradient(#555, #555) center / 100% 1px no-repeat, linear-gradient(#555, #555) center / 1px 7px no-repeat;
}
input[type=range]::-webkit-slider-thumb {
    appearance: none;
    width: 5px;
    height: 12px;
    background: #444;
}
.percent {
    width: 42px;
    text-align: right;
    font-size: 13px;
}
```
